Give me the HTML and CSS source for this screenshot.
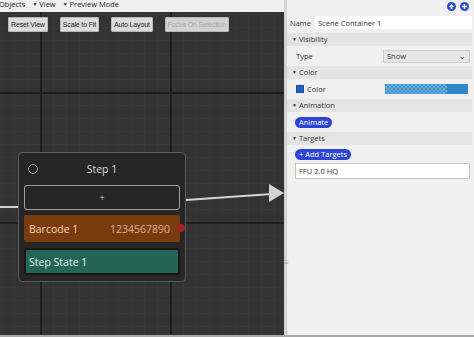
FILE: index.html
```html
<!DOCTYPE html>
<html lang="en">
<head>
    <meta charset="UTF-8" />
    <meta name="viewport" content="width=device-width, initial-scale=1" />
    <title>Scene Editor</title>
    <link rel="stylesheet" href="styles.css">
</head>
<body>
<div class="app">
    <div class="editor">
        <div class="menubar">
            <span class="menu first">Objects</span>
            <span class="menu"><span class="tri">&#9660;</span> View</span>
            <span class="menu"><span class="tri">&#9660;</span> Preview Mode</span>
        </div>
        <div class="canvas">
            <div class="toolbar">
                <button class="tool">Reset View</button>
                <button class="tool">Scale to Fit</button>
                <button class="tool">Auto Layout</button>
                <button class="tool" disabled>Focus On Selection</button>
            </div>

            <!-- connections drawn over the grid -->
            <svg class="links" width="284" height="323" viewBox="0 0 284 323">
                <line x1="0" y1="195" x2="18" y2="195" stroke="#d4d4d4" stroke-width="2"/>
                <line x1="186" y1="188" x2="272" y2="182" stroke="#d4d4d4" stroke-width="2"/>
                <polygon points="269,172 284,181 269,190" fill="#d4d4d4"/>
            </svg>

            <div class="node">
                <div class="node-head">
                    <span class="node-dot"></span>
                    <span class="node-title">Step 1</span>
                </div>
                <div class="node-add">+</div>
                <div class="node-row barcode">
                    <span>Barcode 1</span>
                    <span class="code">1234567890</span>
                    <span class="port"></span>
                </div>
                <div class="node-row state">
                    <span>Step State 1</span>
                </div>
            </div>
        </div>
    </div>

    <aside class="panel">
        <div class="panel-icons">
            <span class="round-btn">
                <svg width="9" height="9" viewBox="0 0 9 9"><path d="M4.5 2 L7 5 H5.3 V7 H3.7 V5 H2 Z" fill="#fff"/></svg>
            </span>
            <span class="round-btn">
                <svg width="9" height="9" viewBox="0 0 9 9"><path d="M4.5 2 V7 M2 4.5 H7" stroke="#fff" stroke-width="1.4"/></svg>
            </span>
        </div>
        <div class="name-row">
            <label>Name</label>
            <input class="name-input" value="Scene Container 1">
        </div>

        <div class="section-head"><span class="tri">&#9660;</span> Visibility</div>
        <div class="prop-row">
            <span class="prop-label">Type</span>
            <span class="select">Show <span class="chev">&#8964;</span></span>
        </div>

        <div class="section-head"><span class="tri">&#9660;</span> Color</div>
        <div class="prop-row">
            <span class="prop-label"><span class="check"></span>Color</span>
            <span class="swatch"><span class="checker"></span></span>
        </div>

        <div class="section-head"><span class="tri">&#9660;</span> Animation</div>
        <div class="prop-row">
            <span class="pill">Animate</span>
        </div>

        <div class="section-head"><span class="tri">&#9660;</span> Targets</div>
        <div class="targets">
            <span class="pill">+ Add Targets</span>
            <div class="target-box">FFU 2.0 HQ</div>
        </div>
        <div class="grip">&#8801;</div>
    </aside>
</div>
</body>
</html>
```

FILE: styles.css
```css
body {
    margin: 0;
    font-family: "Open Sans", "Noto Sans", sans-serif;
    background: #f0f0f0;
    overflow: hidden;
}
.app {
    display: flex;
    height: 335px;
    border-bottom: 2px solid #a8a8a8;
}
.editor {
    width: 284px;
    display: flex;
    flex-direction: column;
}
.menubar {
    height: 12px;
    display: flex;
    gap: 7px;
    font-size: 7.5px;
    line-height: 9px;
    color: #222;
    background: #f0f0f0;
    overflow: hidden;
}
.menu.first {
    margin-left: -1px;
}
.tri {
    font-size: 5px;
    vertical-align: 1px;
}
.canvas {
    position: relative;
    flex: 1;
    background-color: #333333;
    background-image:
        linear-gradient(to right, #1e1e1e 0 2px, transparent 2px),
        linear-gradient(to bottom, #1e1e1e 0 2px, transparent 2px),
        linear-gradient(to right, #373737 0 1px, transparent 1px),
        linear-gradient(to bottom, #373737 0 1px, transparent 1px);
    background-size: 130px 130px, 130px 130px, 13px 13px, 13px 13px;
    background-position: 40px 0, 0 80px, 1px 0, 0 2px;
    overflow: hidden;
}
.toolbar {
    display: flex;
    gap: 12px;
    padding: 5px 0 0 8px;
}
.tool {
    height: 15px;
    padding: 0 2px;
    font-family: "Liberation Sans", Arial, sans-serif;
    font-size: 7px;
    letter-spacing: -0.15px;
    color: #222;
    background: #dcdcdc;
    border: 1px solid #b8b8b8;
    border-radius: 1px;
}
.tool:disabled {
    color: #a6a6a6;
    background: #d2d2d2;
}
.links {
    position: absolute;
    left: 0;
    top: 0;
}
.node {
    position: absolute;
    left: 18px;
    top: 140px;
    width: 168px;
    height: 130px;
    box-sizing: border-box;
    padding: 0 5px;
    background: #262626;
    border: 1px solid #5c5c5c;
    border-radius: 4px;
    display: flex;
    flex-direction: column;
}
.node-head {
    height: 32px;
    display: flex;
    align-items: center;
    position: relative;
}
.node-dot {
    width: 8px;
    height: 8px;
    margin-left: 4px;
    border: 1px solid #9a9a9a;
    border-radius: 50%;
}
.node-title {
    position: absolute;
    left: 0;
    right: 0;
    text-align: center;
    font-size: 10.5px;
    color: #dedede;
}
.node-add {
    height: 25px;
    box-sizing: border-box;
    border: 1px solid #a0a0a0;
    border-radius: 3px;
    color: #cfcfcf;
    font-size: 9px;
    display: flex;
    align-items: center;
    justify-content: center;
}
.node-row {
    height: 27px;
    margin-top: 5px;
    box-sizing: border-box;
    display: flex;
    align-items: center;
    padding: 0 5px;
    font-size: 10.5px;
    border-radius: 2px;
    position: relative;
}
.barcode {
    background: #7a3c0e;
    color: #f4d6bc;
    justify-content: space-between;
}
.barcode .code {
    color: #d9b394;
    margin-right: 5px;
}
.port {
    position: absolute;
    right: -5px;
    top: 9px;
    width: 8px;
    height: 8px;
    border-radius: 50%;
    background: #9b2424;
}
.state {
    margin-top: 6px;
    height: 27px;
    background: #246557;
    border: 2px solid #161616;
    border-radius: 3px;
    color: #e2f3ef;
    padding: 0 3px;
}

/* property panel */
.panel {
    position: relative;
    flex: 1;
    border-left: 3px solid #d2d2d2;
    padding-right: 2px;
    font-size: 7.5px;
    color: #333;
}
.panel-icons {
    height: 16px;
    display: flex;
    justify-content: flex-end;
    gap: 4px;
    padding-right: 3px;
}
.round-btn {
    width: 9px;
    height: 9px;
    margin-top: 2px;
    border-radius: 50%;
    background: #2a4fd0;
    display: flex;
}
.name-row {
    height: 13px;
    display: flex;
    align-items: center;
    gap: 4px;
    padding-left: 3px;
    margin-bottom: 4px;
}
.name-input {
    flex: 1;
    height: 13px;
    box-sizing: border-box;
    border: none;
    background: #fff;
    font-family: inherit;
    font-size: 7.5px;
    padding: 0 3px;
    color: #333;
}
.section-head {
    height: 13px;
    line-height: 13px;
    padding-left: 5px;
    background: #e4e4e4;
    color: #333;
}
.prop-row {
    height: 20px;
    display: flex;
    align-items: center;
    justify-content: space-between;
    padding: 0 2px 0 9px;
}
.prop-label {
    display: flex;
    align-items: center;
    gap: 3px;
}
.check {
    width: 6px;
    height: 6px;
    background: #2160c4;
    border: 1px solid #1b4c9c;
}
.select {
    width: 87px;
    height: 13px;
    box-sizing: border-box;
    display: flex;
    align-items: center;
    justify-content: space-between;
    padding: 0 3px;
    background: #e6e6e6;
    border: 1px solid #cdcdcd;
}
.chev {
    font-size: 8px;
    line-height: 4px;
}
.swatch {
    width: 83px;
    height: 10px;
    margin-right: 2px;
    background: #2f87c6;
    display: flex;
}
.checker {
    width: 62px;
    background-color: #3a8fcc;
    background-image:
        linear-gradient(45deg, #6fb0dc 25%, transparent 25%, transparent 75%, #6fb0dc 75%),
        linear-gradient(45deg, #6fb0dc 25%, transparent 25%, transparent 75%, #6fb0dc 75%);
    background-size: 4px 4px;
    background-position: 0 0, 2px 2px;
}
.pill {
    display: inline-block;
    height: 11px;
    line-height: 11px;
    padding: 0 4px;
    border-radius: 6px;
    background: #2c45d4;
    color: #fff;
}
.prop-row .pill {
    margin-left: -1px;
}
.targets {
    padding: 4px 2px 0 8px;
}
.target-box {
    margin-top: 3px;
    height: 16px;
    line-height: 14px;
    box-sizing: border-box;
    padding: 0 3px;
    background: #fff;
    border: 1px solid #c4c4c4;
}
.grip {
    position: absolute;
    left: -3px;
    top: 256px;
    font-size: 8px;
    color: #b0b0b0;
}
```
